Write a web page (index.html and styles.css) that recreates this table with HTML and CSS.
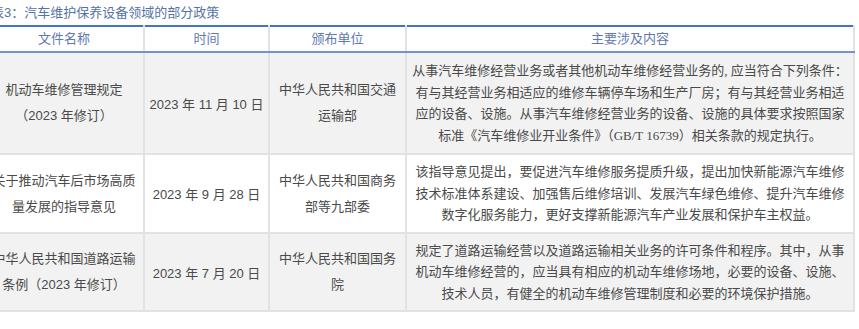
FILE: index.html
```html
<!DOCTYPE html>
<html lang="zh">
<head>
<meta charset="utf-8">
<link rel="stylesheet" href="styles.css">
</head>
<body>
<div class="wrap">
  <div class="caption">表3：汽车维护保养设备领域的部分政策</div>
  <table class="policy">
    <colgroup>
      <col class="c1"><col class="c2"><col class="c3"><col class="c4">
    </colgroup>
    <thead>
      <tr class="head">
        <th>文件名称</th>
        <th>时间</th>
        <th>颁布单位</th>
        <th>主要涉及内容</th>
      </tr>
    </thead>
    <tbody>
      <tr class="r1 shade">
        <td class="name">机动车维修管理规定<br>（2023 年修订）</td>
        <td class="date">2023 年 11 月 10 日</td>
        <td class="org">中华人民共和国交通<br>运输部</td>
        <td class="desc">从事汽车维修经营业务或者其他机动车维修经营业务的, 应当符合下列条件：<br>有与其经营业务相适应的维修车辆停车场和生产厂房；有与其经营业务相适<br>应的设备、设施。从事汽车维修经营业务的设备、设施的具体要求按照国家<br>标准《汽车维修业开业条件》（GB/T 16739）相关条款的规定执行。</td>
      </tr>
      <tr class="r2">
        <td class="name">关于推动汽车后市场高质<br>量发展的指导意见</td>
        <td class="date">2023 年 9 月 28 日</td>
        <td class="org">中华人民共和国商务<br>部等九部委</td>
        <td class="desc">该指导意见提出，要促进汽车维修服务提质升级，提出加快新能源汽车维修<br>技术标准体系建设、加强售后维修培训、发展汽车绿色维修、提升汽车维修<br>数字化服务能力，更好支撑新能源汽车产业发展和保护车主权益。</td>
      </tr>
      <tr class="r3 shade">
        <td class="name">中华人民共和国道路运输<br>条例（2023 年修订）</td>
        <td class="date">2023 年 7 月 20 日</td>
        <td class="org">中华人民共和国国务<br>院</td>
        <td class="desc">规定了道路运输经营以及道路运输相关业务的许可条件和程序。其中，从事<br>机动车维修经营的，应当具有相应的机动车维修场地，必要的设备、设施、<br>技术人员，有健全的机动车维修管理制度和必要的环境保护措施。</td>
      </tr>
    </tbody>
  </table>
</div>
</body>
</html>
```
FILE: styles.css
```css
html, body {
  margin: 0;
  padding: 0;
  background: #ffffff;
}
.wrap {
  margin-left: -17px;
  width: 870px;
  font-family: "Liberation Sans", "Noto Sans CJK SC", sans-serif;
  font-size: 13px;
  color: #4a4a4a;
}
.caption {
  height: 25px;
  line-height: 25px;
  padding-left: 8px;
  color: #5673a8;
  white-space: nowrap;
}
.policy {
  border-collapse: collapse;
  table-layout: fixed;
  width: 870px;
}
.c1 { width: 160px; }
.c2 { width: 125px; }
.c3 { width: 137px; }
.c4 { width: 448px; }
.policy th,
.policy td {
  border: 2px solid #e2e2e2;
  text-align: center;
  vertical-align: middle;
  padding: 0;
  font-weight: normal;
  white-space: nowrap;
}
.policy th {
  border-top: 2px solid #4472c4;
  border-bottom: 2px solid #7193d2;
  color: #6079b0;
  height: 24px;
  line-height: 24px;
}
.shade td { background: #f2f2f2; }
.r2 td { background: #ffffff; }
.name, .org {
  line-height: 26px;
}
.desc {
  font-family: "Liberation Serif", "Noto Sans CJK SC", serif;
  line-height: 21.5px;
  font-size: 13px;
}
.r1 td { height: 100px; }
.r2 td { height: 77px; }
.r3 td { height: 76px; }
```
